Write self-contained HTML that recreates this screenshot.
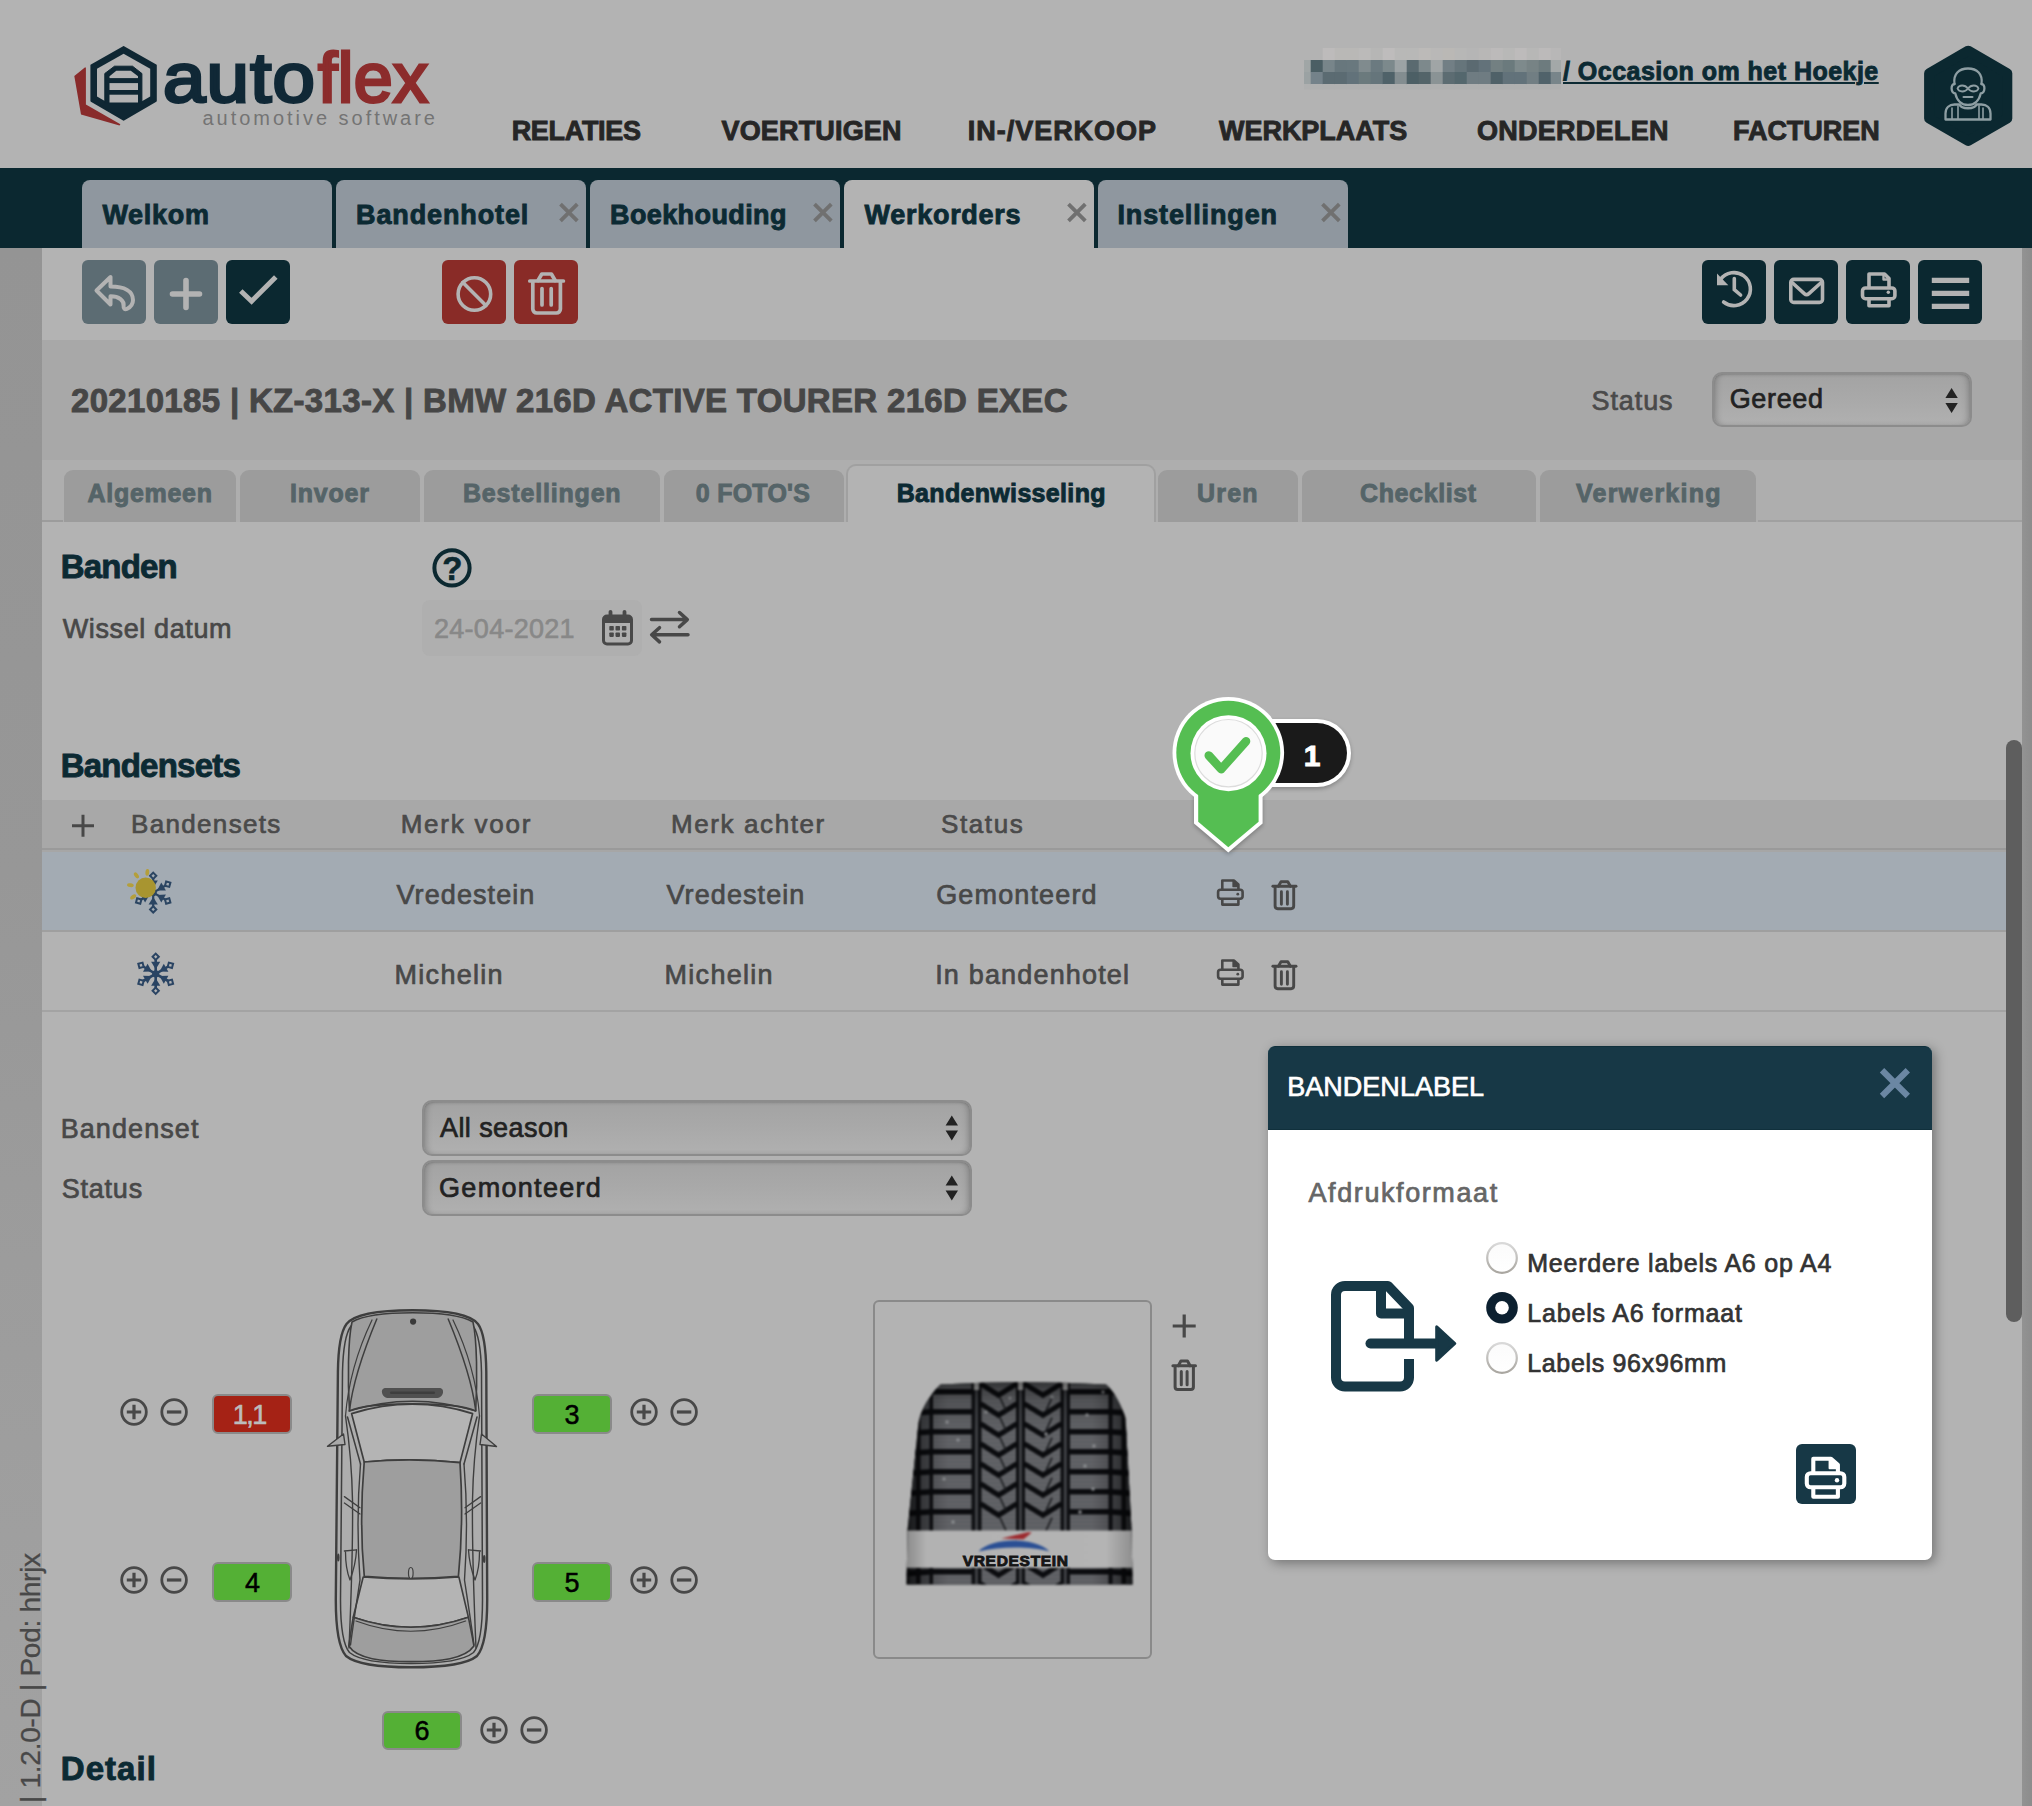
<!DOCTYPE html>
<html lang="nl"><head><meta charset="utf-8"><title>Autoflex - Werkorders</title>
<style>
html,body{margin:0;padding:0;background:#b3b3b3;}
body{width:2032px;height:1806px;overflow:hidden;background:#b3b3b3;font-family:"Liberation Sans",sans-serif;}
#pg{position:relative;width:2032px;height:1806px;overflow:hidden;background:#b3b3b3;}
.a{position:absolute;display:block;}
.t{position:absolute;display:block;white-space:pre;line-height:1;font-family:"Liberation Sans",sans-serif;}
</style></head><body><div id="pg">
<div class="a" style="left:0px;top:0px;width:2032px;height:168px;background:#b3b3b3;"></div>
<svg class="a" style="left:70px;top:40px;filter:blur(.5px);" width="100" height="92" viewBox="70 40 100 92">
<polygon points="84.8,67.6 74.3,75.9 81,114.6 119.5,125.6 120.4,124.3 85.9,104.5 85.9,67.6" fill="#892b2b"/>
<polygon points="123.6,47 155.8,65.3 155.8,100.8 123.6,119.7 91.4,100.8 91.4,65.3" fill="#0f2733" stroke="#0f2733" stroke-width="2" stroke-linejoin="round"/>
<path d="M123.600 53.700 L150.200 68.700 V96.400 L139.800 102.400 H107.400 L97 96.400 V68.700 Z" fill="#b3b3b3"/>
<path d="M104.800 102.900 V73.500 L114.500 66.200 H132.500 L141.900 73.500 V102.900 Z" fill="#0f2733" stroke="#0f2733" stroke-width="1" stroke-linejoin="round"/>
<path d="M109.500 102.400 V76.200 L116.300 70.700 H130.800 L138 76.200 V102.400 Z" fill="#b3b3b3"/>
<rect x="109" y="78.100" width="29.500" height="5" fill="#0f2733"/>
<rect x="109" y="90" width="29.500" height="4.700" fill="#0f2733"/>
</svg>
<svg class="a" style="left:1300px;top:40px;" width="270" height="56" viewBox="1300 40 270 56"><rect x="1304.0" y="60" width="7.0" height="12.2" fill="#a0a6a6"/><rect x="1304.0" y="72" width="7.0" height="12.2" fill="#9ba2a3"/><rect x="1304.0" y="84" width="7.0" height="5.5" fill="#afb0b0"/><rect x="1310.7" y="60" width="12.3" height="12.2" fill="#4b5e64"/><rect x="1310.7" y="72" width="12.3" height="12.2" fill="#74828a"/><rect x="1310.7" y="84" width="12.3" height="5.5" fill="#afb0b0"/><rect x="1322.7" y="48" width="12.3" height="12.2" fill="#bdbbbb"/><rect x="1322.7" y="60" width="12.3" height="12.2" fill="#78858a"/><rect x="1322.7" y="72" width="12.3" height="12.2" fill="#5b6b72"/><rect x="1322.7" y="84" width="12.3" height="5.5" fill="#afb0b0"/><rect x="1334.7" y="48" width="12.3" height="12.2" fill="#b9b8b6"/><rect x="1334.7" y="60" width="12.3" height="12.2" fill="#68777d"/><rect x="1334.7" y="72" width="12.3" height="12.2" fill="#5b6b72"/><rect x="1334.7" y="84" width="12.3" height="5.5" fill="#afb0b0"/><rect x="1346.7" y="48" width="12.3" height="12.2" fill="#b9b8b6"/><rect x="1346.7" y="60" width="12.3" height="12.2" fill="#69787e"/><rect x="1346.7" y="72" width="12.3" height="12.2" fill="#62727a"/><rect x="1346.7" y="84" width="12.3" height="5.5" fill="#afb0b0"/><rect x="1358.7" y="48" width="12.3" height="12.2" fill="#bbbab9"/><rect x="1358.7" y="60" width="12.3" height="12.2" fill="#808b8e"/><rect x="1358.7" y="72" width="12.3" height="12.2" fill="#6b7a7d"/><rect x="1358.7" y="84" width="12.3" height="5.5" fill="#afb0b0"/><rect x="1370.7" y="48" width="12.3" height="12.2" fill="#b6b6b5"/><rect x="1370.7" y="60" width="12.3" height="12.2" fill="#6b7a80"/><rect x="1370.7" y="72" width="12.3" height="12.2" fill="#65757b"/><rect x="1370.7" y="84" width="12.3" height="5.5" fill="#afb0b0"/><rect x="1382.7" y="48" width="12.3" height="12.2" fill="#bebcbc"/><rect x="1382.7" y="60" width="12.3" height="12.2" fill="#7c898c"/><rect x="1382.7" y="72" width="12.3" height="12.2" fill="#4f6269"/><rect x="1382.7" y="84" width="12.3" height="5.5" fill="#afb0b0"/><rect x="1394.7" y="48" width="12.3" height="12.2" fill="#b8b8b7"/><rect x="1394.7" y="60" width="12.3" height="12.2" fill="#9ca3a5"/><rect x="1394.7" y="72" width="12.3" height="12.2" fill="#838d90"/><rect x="1394.7" y="84" width="12.3" height="5.5" fill="#afb0b0"/><rect x="1406.7" y="48" width="12.3" height="12.2" fill="#b8b8b7"/><rect x="1406.7" y="60" width="12.3" height="12.2" fill="#5a6a70"/><rect x="1406.7" y="72" width="12.3" height="12.2" fill="#4c5f65"/><rect x="1406.7" y="84" width="12.3" height="5.5" fill="#afb0b0"/><rect x="1418.7" y="48" width="12.3" height="12.2" fill="#bcbab8"/><rect x="1418.7" y="60" width="12.3" height="12.2" fill="#7d898c"/><rect x="1418.7" y="72" width="12.3" height="12.2" fill="#536469"/><rect x="1418.7" y="84" width="12.3" height="5.5" fill="#afb0b0"/><rect x="1430.7" y="48" width="12.3" height="12.2" fill="#b9b8b7"/><rect x="1430.7" y="60" width="12.3" height="12.2" fill="#a0a5a6"/><rect x="1430.7" y="72" width="12.3" height="12.2" fill="#8a9395"/><rect x="1430.7" y="84" width="12.3" height="5.5" fill="#afb0b0"/><rect x="1442.7" y="48" width="12.3" height="12.2" fill="#bab8b5"/><rect x="1442.7" y="60" width="12.3" height="12.2" fill="#727f85"/><rect x="1442.7" y="72" width="12.3" height="12.2" fill="#5c6c72"/><rect x="1442.7" y="84" width="12.3" height="5.5" fill="#afb0b0"/><rect x="1454.7" y="48" width="12.3" height="12.2" fill="#b7b7b6"/><rect x="1454.7" y="60" width="12.3" height="12.2" fill="#66757b"/><rect x="1454.7" y="72" width="12.3" height="12.2" fill="#54676d"/><rect x="1454.7" y="84" width="12.3" height="5.5" fill="#afb0b0"/><rect x="1466.7" y="48" width="12.3" height="12.2" fill="#b5b5b5"/><rect x="1466.7" y="60" width="12.3" height="12.2" fill="#5b6a71"/><rect x="1466.7" y="72" width="12.3" height="12.2" fill="#6f7c82"/><rect x="1466.7" y="84" width="12.3" height="5.5" fill="#afb0b0"/><rect x="1478.7" y="48" width="12.3" height="12.2" fill="#b8b7b6"/><rect x="1478.7" y="60" width="12.3" height="12.2" fill="#63727a"/><rect x="1478.7" y="72" width="12.3" height="12.2" fill="#6f7c82"/><rect x="1478.7" y="84" width="12.3" height="5.5" fill="#afb0b0"/><rect x="1490.7" y="48" width="12.3" height="12.2" fill="#bcbaba"/><rect x="1490.7" y="60" width="12.3" height="12.2" fill="#738082"/><rect x="1490.7" y="72" width="12.3" height="12.2" fill="#4f6168"/><rect x="1490.7" y="84" width="12.3" height="5.5" fill="#afb0b0"/><rect x="1502.7" y="48" width="12.3" height="12.2" fill="#b8b8b7"/><rect x="1502.7" y="60" width="12.3" height="12.2" fill="#6b7a7d"/><rect x="1502.7" y="72" width="12.3" height="12.2" fill="#62727a"/><rect x="1502.7" y="84" width="12.3" height="5.5" fill="#afb0b0"/><rect x="1514.7" y="48" width="12.3" height="12.2" fill="#bdbbbb"/><rect x="1514.7" y="60" width="12.3" height="12.2" fill="#7e8a8c"/><rect x="1514.7" y="72" width="12.3" height="12.2" fill="#62727a"/><rect x="1514.7" y="84" width="12.3" height="5.5" fill="#afb0b0"/><rect x="1526.7" y="48" width="12.3" height="12.2" fill="#b7b7b6"/><rect x="1526.7" y="60" width="12.3" height="12.2" fill="#778385"/><rect x="1526.7" y="72" width="12.3" height="12.2" fill="#717e83"/><rect x="1526.7" y="84" width="12.3" height="5.5" fill="#afb0b0"/><rect x="1538.7" y="48" width="12.3" height="12.2" fill="#bcbaba"/><rect x="1538.7" y="60" width="12.3" height="12.2" fill="#6d7b7e"/><rect x="1538.7" y="72" width="12.3" height="12.2" fill="#50626a"/><rect x="1538.7" y="84" width="12.3" height="5.5" fill="#afb0b0"/><rect x="1550.7" y="48" width="10.3" height="12.2" fill="#b8b7b7"/><rect x="1550.7" y="60" width="10.3" height="12.2" fill="#a3a8a8"/><rect x="1550.7" y="72" width="10.3" height="12.2" fill="#78858a"/><rect x="1550.7" y="84" width="10.3" height="5.5" fill="#afb0b0"/></svg>
<svg class="a" style="left:1918px;top:40px;" width="100" height="112" viewBox="1918 40 100 112">
<polygon points="1968.2,50.7 2007.3,73.3 2007.3,118.4 1968.2,141 1929.1,118.4 1929.1,73.3" fill="#0b2830" stroke="#0b2830" stroke-width="10" stroke-linejoin="round"/>
<g fill="none" stroke="#8e9ea3" stroke-width="2.3" stroke-linecap="round" stroke-linejoin="round">
<path d="M1954.5 84 C1953 74 1959 68.5 1968 68.5 C1977 68.5 1983 74 1981.5 84"/>
<path d="M1954.5 84 c-4 0 -4 9 0.8 9.5 C1957 101 1962 105 1968 105 C1974 105 1979 101 1980.7 93.5 c4.800 -0.500 4.800 -9.500 0.800 -9.500"/>
<path d="M1968 88.500 c-3 -4 -9 -4 -10.500 0 c1.500 4 7.500 4 10.500 0 c3 -4 9 -4 10.500 0 c-1.500 4 -7.500 4 -10.500 0 z" stroke-width="1.800"/>
<path d="M1963.500 97 h9" stroke-width="2"/>
<path d="M1945.500 119.500 v-6 c0 -6 4 -9 9 -9 h5 c2 5 15 5 17 0 h5 c5 0 9 3 9 9 v6 z"/>
<path d="M1952 108 v11 M1958 106 v13 M1979 106 v13 M1983 108 v11" stroke-width="1.600"/>
</g></svg>
<div class="a" style="left:0px;top:168px;width:2032px;height:80px;background:#0b2830;"></div>
<div class="a" style="left:82px;top:180px;width:250px;height:68px;background:#8f979f;border-radius:8px 8px 0 0;"></div>
<div class="a" style="left:336px;top:180px;width:250px;height:68px;background:#8f979f;border-radius:8px 8px 0 0;"></div>
<div class="a" style="left:590px;top:180px;width:250px;height:68px;background:#8f979f;border-radius:8px 8px 0 0;"></div>
<div class="a" style="left:844px;top:180px;width:250px;height:68px;background:#b3b3b3;border-radius:8px 8px 0 0;"></div>
<div class="a" style="left:1098px;top:180px;width:250px;height:68px;background:#8f979f;border-radius:8px 8px 0 0;"></div>
<svg class="a" style="left:550px;top:198px;" width="800" height="32" viewBox="550 198 800 32"><path d="M560.5 204.100 L577.3 220.900 M577.3 204.100 L560.5 220.900" stroke="#707070" stroke-width="3.800" fill="none"/><path d="M814.5 204.100 L831.3 220.900 M831.3 204.100 L814.5 220.900" stroke="#707070" stroke-width="3.800" fill="none"/><path d="M1068.5 204.100 L1085.3000000000002 220.900 M1085.3000000000002 204.100 L1068.5 220.900" stroke="#707070" stroke-width="3.800" fill="none"/><path d="M1322.5 204.100 L1339.3000000000002 220.900 M1339.3000000000002 204.100 L1322.5 220.900" stroke="#707070" stroke-width="3.800" fill="none"/></svg>
<div class="a" style="left:0px;top:248px;width:42px;height:1558px;background:linear-gradient(180deg,#949494 0%,#979797 40%,#9c9c9c 65%,#a2a2a2 100%);"></div>
<div class="a" style="left:2022px;top:248px;width:10px;height:1558px;background:linear-gradient(90deg,#939393,#8c8c8c);"></div>
<div class="a" style="left:42px;top:248px;width:1980px;height:92px;background:#b3b3b3;"></div>
<div class="a" style="left:82px;top:260px;width:64px;height:64px;background:#5c6c73;border-radius:6px;"></div>
<div class="a" style="left:154px;top:260px;width:64px;height:64px;background:#5c6c73;border-radius:6px;"></div>
<div class="a" style="left:226px;top:260px;width:64px;height:64px;background:#0b2830;border-radius:6px;"></div>
<div class="a" style="left:442px;top:260px;width:64px;height:64px;background:#892b27;border-radius:6px;"></div>
<div class="a" style="left:514px;top:260px;width:64px;height:64px;background:#892b27;border-radius:6px;"></div>
<div class="a" style="left:1702px;top:260px;width:64px;height:64px;background:#0b2830;border-radius:6px;"></div>
<div class="a" style="left:1774px;top:260px;width:64px;height:64px;background:#0b2830;border-radius:6px;"></div>
<div class="a" style="left:1846px;top:260px;width:64px;height:64px;background:#0b2830;border-radius:6px;"></div>
<div class="a" style="left:1918px;top:260px;width:64px;height:64px;background:#0b2830;border-radius:6px;"></div>
<svg class="a" style="left:82px;top:260px;" width="1900" height="64" viewBox="82 260 1900 64"><g fill="none" stroke="#b3b3b3" stroke-linecap="round" stroke-linejoin="round">
<path d="M96.500 290.500 L110.500 277 V286.500 C124.500 286.500 133 291 133 300 C133 304 131 307 126.800 309 C124.800 309.800 123.300 308.300 123.600 306.200 C124.400 300.500 119 296.200 110.500 296.200 V304.500 Z" stroke-width="4"/>
<path d="M186 280.500 V307.500 M172.500 294 H199.500" stroke-width="5.600"/>
<path d="M240.800 291 L251.600 301.200 L275.800 277" stroke-width="5" stroke-linecap="butt" stroke-linejoin="miter"/>
<circle cx="474.400" cy="294" r="16.300" stroke-width="3.600"/>
<path d="M462.900 282.500 L485.900 305.500" stroke-width="3.600"/>
<g stroke-width="3.700">
<path d="M529.800 281 H563.400"/>
<path d="M538 280.500 L541.800 274 H551.400 L555.200 280.500"/>
<path d="M532.800 282 V309 a4 4 0 0 0 4 4 H556.400 a4 4 0 0 0 4 -4 V282"/>
<path d="M542 288.500 V305 M551.200 288.500 V305"/>
</g>
<g stroke-width="3.600">
<path d="M1720.500 279.500 A16.500 16.500 0 1 1 1723.600 302"/>
<path d="M1734.300 278.600 V289.600 L1740.600 295" stroke-linejoin="miter"/>
<path d="M1717 273.500 V285.200 H1728.300 Z" fill="#b3b3b3" stroke="none"/>
<rect x="1790.800" y="279.400" width="31.700" height="23" rx="3"/>
<path d="M1791.500 282 L1804.300 293.600 a3.400 3.400 0 0 0 4.600 0 L1821.800 282"/>
<path d="M1869 287.500 V274 H1884.500 L1889 278.500 V287.500" stroke-linecap="butt"/>
<path d="M1883.500 274.500 V279.500 H1888.500" stroke-width="2.400"/>
<rect x="1862.500" y="288" width="32.400" height="10.700" rx="3"/>
<path d="M1869 299 V305.700 H1889 V299" stroke-linecap="butt"/>
</g>
<circle cx="1888.300" cy="292.200" r="1.700" fill="#b3b3b3" stroke="none"/>
<path d="M1931.800 280.400 H1969.200 M1931.800 293.400 H1969.200 M1931.800 306.400 H1969.200" stroke-width="5.200" stroke-linecap="butt"/>
</g></svg>
<div class="a" style="left:42px;top:340px;width:1980px;height:120px;background:#a8a8a8;"></div>
<div class="a" style="left:1712px;top:372px;width:260px;height:55px;background:;border:2px solid #8c8c8c;border-radius:10px;box-sizing:border-box;background:linear-gradient(180deg,#a3a3a3 0%,#a9a9a9 50%,#b0b0b0 100%);box-shadow:inset 5px 0 6px -3px rgba(0,0,0,.22),inset -5px 0 6px -3px rgba(0,0,0,.22),inset 0 1px 2px rgba(0,0,0,.1);"></div>
<svg class="a" style="left:1940px;top:384px;" width="24" height="32" viewBox="1940 384 24 32"><path d="M1945.3999999999999 397.9 L1951.6 388.0 L1957.8 397.9 Z M1945.3999999999999 403.1 L1951.6 413.0 L1957.8 403.1 Z" fill="#222"/></svg>
<div class="a" style="left:42px;top:460px;width:1980px;height:62px;background:#aeaeae;"></div>
<div class="a" style="left:42px;top:520px;width:21px;height:2px;background:#9c9c9c;"></div>
<div class="a" style="left:1758px;top:520px;width:264px;height:2px;background:#a0a0a0;"></div>
<div class="a" style="left:64px;top:470px;width:172px;height:52px;background:#9c9c9c;border-radius:9px 9px 0 0;"></div>
<div class="a" style="left:240px;top:470px;width:180px;height:52px;background:#9c9c9c;border-radius:9px 9px 0 0;"></div>
<div class="a" style="left:424px;top:470px;width:236px;height:52px;background:#9c9c9c;border-radius:9px 9px 0 0;"></div>
<div class="a" style="left:664px;top:470px;width:180px;height:52px;background:#9c9c9c;border-radius:9px 9px 0 0;"></div>
<div class="a" style="left:1158px;top:470px;width:140px;height:52px;background:#9c9c9c;border-radius:9px 9px 0 0;"></div>
<div class="a" style="left:1302px;top:470px;width:234px;height:52px;background:#9c9c9c;border-radius:9px 9px 0 0;"></div>
<div class="a" style="left:1540px;top:470px;width:216px;height:52px;background:#9c9c9c;border-radius:9px 9px 0 0;"></div>
<div class="a" style="left:846px;top:464px;width:310px;height:58px;background:#b3b3b3;border:2px solid #a0a0a0;border-bottom:none;border-radius:10px 10px 0 0;box-sizing:border-box;"></div>
<svg class="a" style="left:430px;top:546px;" width="44" height="44" viewBox="430 546 44 44"><circle cx="452" cy="567.900" r="17.600" fill="none" stroke="#0b2830" stroke-width="4"/></svg>
<span class="t" style="left:442.300px;top:552px;font-size:33px;font-weight:700;color:#0b2830;-webkit-text-stroke:.6px;">?</span>
<div class="a" style="left:422px;top:600px;width:220px;height:56px;background:#afafaf;border-radius:8px;"></div>
<svg class="a" style="left:598px;top:606px;" width="96" height="44" viewBox="598 606 96 44"><g fill="none" stroke="#484848" stroke-width="3" stroke-linejoin="round">
<rect x="603.500" y="616" width="28" height="28" rx="3.500"/>
<rect x="604" y="616.500" width="27" height="6.500" fill="#484848" stroke="none"/>
<path d="M610.500 611.800 V618 M624.500 611.800 V618" stroke-width="3.800" stroke-linecap="round"/>
</g>
<g fill="#484848"><rect x="609.300" y="626" width="4.500" height="4.500" rx=".8"/><rect x="615.500" y="626" width="4.500" height="4.500" rx=".8"/><rect x="621.900" y="626" width="4.500" height="4.500" rx=".8"/>
<rect x="609.300" y="632.400" width="4.500" height="4.500" rx=".8"/><rect x="615.500" y="632.400" width="4.500" height="4.500" rx=".8"/><rect x="621.900" y="632.400" width="4.500" height="4.500" rx=".8"/></g>
<g fill="none" stroke="#484848" stroke-width="3.500" stroke-linecap="round" stroke-linejoin="round">
<path d="M651.500 619.600 H686.500 M679.500 612.500 L687.300 619.600 L679.500 626.700"/>
<path d="M688 634.800 H652.500 M659.500 627.700 L651.700 634.800 L659.500 641.900"/>
</g></svg>
<div class="a" style="left:42px;top:800px;width:1964px;height:48px;background:#a8a8a8;"></div>
<div class="a" style="left:42px;top:848px;width:1964px;height:2px;background:#9a9a9a;"></div>
<div class="a" style="left:42px;top:850px;width:1964px;height:2px;background:#a6a6a6;"></div>
<div class="a" style="left:42px;top:852px;width:1964px;height:78px;background:#a3abb3;"></div>
<div class="a" style="left:42px;top:930px;width:1964px;height:2px;background:#9f9f9f;"></div>
<div class="a" style="left:42px;top:1010px;width:1964px;height:2px;background:#a3a3a3;"></div>
<svg class="a" style="left:70px;top:812px;" width="28" height="28" viewBox="70 812 28 28"><path d="M83 814.800 V836.800 M72 825.800 H94" stroke="#484848" stroke-width="3" fill="none"/></svg>
<svg class="a" style="left:1214px;top:876px;" width="90" height="38" viewBox="1214 876 90 38"><g fill="none" stroke="#484848" stroke-width="2.6" stroke-linejoin="round"><path d="M1222.3 889.7 V880.5 H1233.9 L1238.4 884.4 V889.7"/><rect x="1218.1" y="889.7" width="24.5" height="9.0" rx="2.4"/><path d="M1222.3 898.7 V904.6 H1238.4 V898.7"/><path d="M1233.0 880.5 V886.6 H1238.4 Z" fill="#484848" stroke-width="1.30"/></g><circle cx="1237.8" cy="894.2" r="1.4" fill="#484848"/><g fill="none" stroke="#484848" stroke-width="2.9" stroke-linecap="round" stroke-linejoin="round"><path d="M1272.9 886.3 H1296.0"/><path d="M1278.4 886.3 L1281.0 881.8 H1287.8 L1290.4 886.3"/><path d="M1275.1 887.3 V906.1 a2.6 2.6 0 0 0 2.6 2.6 H1291.1 a2.6 2.6 0 0 0 2.6 -2.6 V887.3"/><path d="M1281.4 891.7 V904.2 M1287.4 891.7 V904.2"/></g></svg>
<svg class="a" style="left:1214px;top:956px;" width="90" height="38" viewBox="1214 956 90 38"><g fill="none" stroke="#484848" stroke-width="2.6" stroke-linejoin="round"><path d="M1222.3 969.7 V960.5 H1233.9 L1238.4 964.4 V969.7"/><rect x="1218.1" y="969.7" width="24.5" height="9.0" rx="2.4"/><path d="M1222.3 978.7 V984.6 H1238.4 V978.7"/><path d="M1233.0 960.5 V966.6 H1238.4 Z" fill="#484848" stroke-width="1.30"/></g><circle cx="1237.8" cy="974.2" r="1.4" fill="#484848"/><g fill="none" stroke="#484848" stroke-width="2.9" stroke-linecap="round" stroke-linejoin="round"><path d="M1272.9 966.3 H1296.0"/><path d="M1278.4 966.3 L1281.0 961.8 H1287.8 L1290.4 966.3"/><path d="M1275.1 967.3 V986.1 a2.6 2.6 0 0 0 2.6 2.6 H1291.1 a2.6 2.6 0 0 0 2.6 -2.6 V967.3"/><path d="M1281.4 971.7 V984.2 M1287.4 971.7 V984.2"/></g></svg>
<svg class="a" style="left:124px;top:864px;filter:blur(.7px);" width="54" height="54" viewBox="124 864 54 54"><path d="M153.2 892.6 L153.2 878.3" stroke="#2b4562" stroke-width="2.2"/><rect x="-2.2" y="-2.2" width="4.4" height="4.4" fill="none" stroke="#2b4562" stroke-width="2" transform="translate(153.2 875.8) rotate(-45)"/><path d="M153.2 888.1 L157.8 880.6 L148.6 880.6 Z" fill="#2b4562"/><path d="M153.2 892.6 L165.6 885.5" stroke="#2b4562" stroke-width="2.2"/><rect x="-2.2" y="-2.2" width="4.4" height="4.4" fill="none" stroke="#2b4562" stroke-width="2" transform="translate(167.7 884.2) rotate(15)"/><path d="M157.1 890.4 L165.9 890.6 L161.3 882.6 Z" fill="#2b4562"/><path d="M153.2 892.6 L165.6 899.8" stroke="#2b4562" stroke-width="2.2"/><rect x="-2.2" y="-2.2" width="4.4" height="4.4" fill="none" stroke="#2b4562" stroke-width="2" transform="translate(167.7 901.0) rotate(75)"/><path d="M157.1 894.9 L161.3 902.6 L165.9 894.6 Z" fill="#2b4562"/><path d="M153.2 892.6 L153.2 906.9" stroke="#2b4562" stroke-width="2.2"/><rect x="-2.2" y="-2.2" width="4.4" height="4.4" fill="none" stroke="#2b4562" stroke-width="2" transform="translate(153.2 909.4) rotate(135)"/><path d="M153.2 897.1 L148.6 904.6 L157.8 904.6 Z" fill="#2b4562"/><path d="M153.2 892.6 L140.8 899.8" stroke="#2b4562" stroke-width="2.2"/><rect x="-2.2" y="-2.2" width="4.4" height="4.4" fill="none" stroke="#2b4562" stroke-width="2" transform="translate(138.7 901.0) rotate(195)"/><path d="M149.3 894.9 L140.5 894.6 L145.1 902.6 Z" fill="#2b4562"/><circle cx="153.2" cy="892.6" r="3.600" fill="#2b4562"/><circle cx="145.700" cy="887.800" r="10.200" fill="#a89530"/><ellipse cx="0" cy="0" rx="3.400" ry="1.900" fill="#b49f3c" transform="translate(147.3 872.4) rotate(276)"/><ellipse cx="0" cy="0" rx="3.400" ry="1.900" fill="#b49f3c" transform="translate(136.4 875.4) rotate(233)"/><ellipse cx="0" cy="0" rx="3.400" ry="1.900" fill="#b49f3c" transform="translate(130.4 885.2) rotate(189.5)"/><ellipse cx="0" cy="0" rx="3.400" ry="1.900" fill="#b49f3c" transform="translate(133.2 896.9) rotate(144)"/></svg>
<svg class="a" style="left:132px;top:950px;filter:blur(.7px);" width="48" height="48" viewBox="132 950 48 48"><path d="M155.7 973.8 L155.7 959.3" stroke="#2a4463" stroke-width="2.6"/><rect x="-2.2" y="-2.2" width="4.4" height="4.4" fill="none" stroke="#2a4463" stroke-width="2" transform="translate(155.7 956.8) rotate(-45)"/><path d="M155.7 969.3 L160.3 961.8 L151.1 961.8 Z" fill="#2a4463"/><path d="M155.7 973.8 L168.3 966.5" stroke="#2a4463" stroke-width="2.6"/><rect x="-2.2" y="-2.2" width="4.4" height="4.4" fill="none" stroke="#2a4463" stroke-width="2" transform="translate(170.4 965.3) rotate(15)"/><path d="M159.6 971.5 L168.4 971.8 L163.8 963.8 Z" fill="#2a4463"/><path d="M155.7 973.8 L168.3 981.0" stroke="#2a4463" stroke-width="2.6"/><rect x="-2.2" y="-2.2" width="4.4" height="4.4" fill="none" stroke="#2a4463" stroke-width="2" transform="translate(170.4 982.3) rotate(75)"/><path d="M159.6 976.0 L163.8 983.8 L168.4 975.8 Z" fill="#2a4463"/><path d="M155.7 973.8 L155.7 988.3" stroke="#2a4463" stroke-width="2.6"/><rect x="-2.2" y="-2.2" width="4.4" height="4.4" fill="none" stroke="#2a4463" stroke-width="2" transform="translate(155.7 990.8) rotate(135)"/><path d="M155.7 978.3 L151.1 985.8 L160.3 985.8 Z" fill="#2a4463"/><path d="M155.7 973.8 L143.1 981.0" stroke="#2a4463" stroke-width="2.6"/><rect x="-2.2" y="-2.2" width="4.4" height="4.4" fill="none" stroke="#2a4463" stroke-width="2" transform="translate(141.0 982.3) rotate(195)"/><path d="M151.8 976.0 L143.0 975.8 L147.6 983.8 Z" fill="#2a4463"/><path d="M155.7 973.8 L143.1 966.5" stroke="#2a4463" stroke-width="2.6"/><rect x="-2.2" y="-2.2" width="4.4" height="4.4" fill="none" stroke="#2a4463" stroke-width="2" transform="translate(141.0 965.3) rotate(255)"/><path d="M151.8 971.5 L147.6 963.8 L143.0 971.8 Z" fill="#2a4463"/><circle cx="155.7" cy="973.8" r="3.600" fill="#2a4463"/></svg>
<div class="a" style="left:422px;top:1100px;width:550px;height:56px;background:;border:2px solid #8c8c8c;border-radius:10px;box-sizing:border-box;background:linear-gradient(180deg,#a3a3a3 0%,#a9a9a9 50%,#b0b0b0 100%);box-shadow:inset 5px 0 6px -3px rgba(0,0,0,.22),inset -5px 0 6px -3px rgba(0,0,0,.22),inset 0 1px 2px rgba(0,0,0,.1);"></div>
<div class="a" style="left:422px;top:1160px;width:550px;height:56px;background:;border:2px solid #8c8c8c;border-radius:10px;box-sizing:border-box;background:linear-gradient(180deg,#a3a3a3 0%,#a9a9a9 50%,#b0b0b0 100%);box-shadow:inset 5px 0 6px -3px rgba(0,0,0,.22),inset -5px 0 6px -3px rgba(0,0,0,.22),inset 0 1px 2px rgba(0,0,0,.1);"></div>
<svg class="a" style="left:940px;top:1112px;" width="24" height="32" viewBox="940 1112 24 32"><path d="M945.5999999999999 1125.4 L951.8 1115.5 L958.0 1125.4 Z M945.5999999999999 1130.6 L951.8 1140.5 L958.0 1130.6 Z" fill="#222"/></svg>
<svg class="a" style="left:940px;top:1172px;" width="24" height="32" viewBox="940 1172 24 32"><path d="M945.5999999999999 1185.4 L951.8 1175.5 L958.0 1185.4 Z M945.5999999999999 1190.6 L951.8 1200.5 L958.0 1190.6 Z" fill="#222"/></svg>
<div class="a" style="left:212px;top:1394px;width:80px;height:39.5px;background:#a52215;border:2px solid #8a8a8a;border-radius:6px;box-sizing:border-box;"></div>
<div class="a" style="left:532px;top:1394px;width:80px;height:39.5px;background:#54b035;border:2px solid #8a8a8a;border-radius:6px;box-sizing:border-box;"></div>
<div class="a" style="left:212px;top:1562px;width:80px;height:39.5px;background:#54b035;border:2px solid #8a8a8a;border-radius:6px;box-sizing:border-box;"></div>
<div class="a" style="left:532px;top:1562px;width:80px;height:39.5px;background:#54b035;border:2px solid #8a8a8a;border-radius:6px;box-sizing:border-box;"></div>
<div class="a" style="left:382px;top:1710.5px;width:80px;height:39.5px;background:#54b035;border:2px solid #8a8a8a;border-radius:6px;box-sizing:border-box;"></div>
<svg class="a" style="left:118.19999999999999px;top:1395.9px;" width="74" height="32" viewBox="118.19999999999999 1395.9 74 32"><g fill="none" stroke="#484848" stroke-width="2.800"><circle cx="134.2" cy="1411.9" r="12.300"/><path d="M126.99999999999999 1411.9 H141.39999999999998 M134.2 1404.7 V1419.1000000000001" stroke-width="3.200"/><circle cx="174.29999999999998" cy="1411.9" r="12.300"/><path d="M167.1 1411.9 H181.49999999999997" stroke-width="3.200"/></g></svg>
<svg class="a" style="left:628.1px;top:1395.9px;" width="74" height="32" viewBox="628.1 1395.9 74 32"><g fill="none" stroke="#484848" stroke-width="2.800"><circle cx="644.1" cy="1411.9" r="12.300"/><path d="M636.9 1411.9 H651.3000000000001 M644.1 1404.7 V1419.1000000000001" stroke-width="3.200"/><circle cx="684.2" cy="1411.9" r="12.300"/><path d="M677.0 1411.9 H691.4000000000001" stroke-width="3.200"/></g></svg>
<svg class="a" style="left:118.19999999999999px;top:1563.7px;" width="74" height="32" viewBox="118.19999999999999 1563.7 74 32"><g fill="none" stroke="#484848" stroke-width="2.800"><circle cx="134.2" cy="1579.7" r="12.300"/><path d="M126.99999999999999 1579.7 H141.39999999999998 M134.2 1572.5 V1586.9" stroke-width="3.200"/><circle cx="174.29999999999998" cy="1579.7" r="12.300"/><path d="M167.1 1579.7 H181.49999999999997" stroke-width="3.200"/></g></svg>
<svg class="a" style="left:628.1px;top:1563.7px;" width="74" height="32" viewBox="628.1 1563.7 74 32"><g fill="none" stroke="#484848" stroke-width="2.800"><circle cx="644.1" cy="1579.7" r="12.300"/><path d="M636.9 1579.7 H651.3000000000001 M644.1 1572.5 V1586.9" stroke-width="3.200"/><circle cx="684.2" cy="1579.7" r="12.300"/><path d="M677.0 1579.7 H691.4000000000001" stroke-width="3.200"/></g></svg>
<svg class="a" style="left:478.1px;top:1713.5px;" width="74" height="32" viewBox="478.1 1713.5 74 32"><g fill="none" stroke="#484848" stroke-width="2.800"><circle cx="494.1" cy="1729.5" r="12.300"/><path d="M486.90000000000003 1729.5 H501.3 M494.1 1722.3 V1736.7" stroke-width="3.200"/><circle cx="534.2" cy="1729.5" r="12.300"/><path d="M527.0 1729.5 H541.4000000000001" stroke-width="3.200"/></g></svg>
<svg class="a" style="left:320px;top:1300px;filter:blur(.7px);" width="184" height="380" viewBox="320 1300 184 380"><g fill="none" stroke="#3e3e3e" stroke-width="1.500" stroke-linejoin="round" stroke-linecap="round">
<path d="M412.500 1310.300 C445 1310.300 470 1314 478 1324 C484 1332 486 1348 486.300 1372 L487.200 1600 C487.200 1630 484 1648 477 1656 C466 1665 440 1667.300 411 1667.300 C382 1667.300 357 1665 346 1656 C339 1648 335.800 1630 335.800 1600 L337.900 1372 C338.200 1348 340.500 1332 346.500 1324 C354.500 1314 380 1310.300 412.500 1310.300 Z" fill="#adadad" stroke-width="2.400"/>
<path d="M412.500 1314 C442 1314 465 1317 473 1326 C479 1334 481 1350 481.500 1372 L482.500 1600 C482.500 1629 480 1645 473.500 1652.500 C463 1661 438 1663.500 411 1663.500 C384 1663.500 360 1661 349.500 1652.500 C343 1645 340.500 1629 340.500 1600 L342.500 1372 C343 1350 345 1334 351 1326 C359 1317 383 1314 412.500 1314 Z" stroke-width="1.500"/>
<path d="M352 1322 C365 1314.500 390 1312.800 412.600 1312.800 C435 1312.800 460 1314.500 473 1322 C477 1340 477.500 1380 475.700 1411 C455 1401.500 370 1401.500 349.500 1411 C347.500 1380 348 1340 352 1322 Z" fill="#9e9e9e" stroke-width="1.600"/>
<path d="M376.800 1319 C366 1345 353 1380 349.500 1410.500 M448.200 1319 C459 1345 472 1380 475.700 1410.500" stroke-width="1.500"/>
<path d="M372 1320 C360 1345 348.500 1378 345.500 1416 M453 1320 C465 1345 476.500 1378 479.500 1416" stroke-width="1.200"/>
<path d="M351.600 1413.600 Q412.600 1394.800 472.600 1413.600 L460 1462.600 Q412.600 1457.500 364.200 1462 Z" fill="#b4b4b4" stroke-width="1.700"/>
<path d="M349 1411 Q412.600 1391.500 475.700 1411" stroke-width="1.300"/>
<path d="M347.500 1417 L360.500 1464 M477 1417 L464 1464" stroke-width="1.500"/>
<path d="M364.200 1462 Q412.600 1457.500 460 1462.600 C462.500 1500 461.500 1545 458.400 1576.300 Q411 1580.500 364.300 1576.300 C361.200 1545 361 1500 364.200 1462 Z" fill="#9e9e9e" stroke-width="1.700"/>
<path d="M363.200 1577 Q411 1581 458.900 1577 L468.400 1617.300 Q410.800 1637.300 353.200 1617.300 Z" fill="#b4b4b4" stroke-width="1.600"/>
<path d="M353.200 1617.300 Q410.800 1637.300 468.400 1617.300 C471 1630 473 1640 473.900 1646 C465 1659 440 1661.600 411 1661.600 C382 1661.600 357 1659 348.800 1646 C349.700 1640 351 1630 353.200 1617.300 Z" fill="#9e9e9e" stroke-width="1.600"/>
<path d="M356 1621 Q410.800 1641.500 465.600 1621" stroke-width="1.200"/>
<path d="M345.500 1416 C349 1440 352 1470 352.500 1500 C353 1540 351.500 1590 349 1648 M479.500 1416 C476 1440 473 1470 472.500 1500 C472 1540 473.500 1590 476 1648" stroke-width="1.400"/>
<path d="M360.500 1464 C357.500 1500 357.500 1545 360 1580 C357 1600 353 1625 350.500 1645 M464 1464 C467 1500 467 1545 464.500 1580 C467.500 1600 471.500 1625 474 1645" stroke-width="1.400"/>
<path d="M344.400 1496.600 L360 1507.700 M344.400 1503 L360 1514 M480.600 1496.600 L465 1507.700 M480.600 1503 L465 1514" stroke-width="1.300"/>
<path d="M344.400 1551 L356.500 1549.800 M480.600 1551 L468.500 1549.800" stroke-width="1.300"/>
<path d="M345.500 1552 C345.500 1565 348 1575 350 1580 C353 1572 356 1560 356.500 1550 M479.500 1552 C479.500 1565 477 1575 475 1580 C472 1572 469 1560 468.500 1550" stroke-width="1.300"/>
<ellipse cx="410.800" cy="1573" rx="2.300" ry="5.500" fill="#a8a8a8" stroke-width="1.200"/>
<path d="M343.500 1434 L327.500 1446.300 L345 1444.500 Z M481.500 1434 L496.500 1446.500 L480 1444.500 Z" fill="#a9a9a9" stroke-width="1.400"/>
</g>
<path d="M386 1388 H439 C442 1388 443.500 1390 443 1392.500 C442.500 1396 440 1398 436 1398 H389 C385 1398 382.500 1396 382 1392.500 C381.500 1390 383 1388 386 1388 Z" fill="#505050"/>
<rect x="390" y="1391.500" width="45" height="2.500" rx="1.200" fill="#3e3e3e"/>
<circle cx="413.100" cy="1321.600" r="3.100" fill="#3a3a3a"/>
<ellipse cx="338.300" cy="1557.500" rx="1.300" ry="4" fill="#3e3e3e"/><ellipse cx="484.200" cy="1559" rx="1.300" ry="4" fill="#3e3e3e"/>
</svg>
<div class="a" style="left:873px;top:1300px;width:279px;height:359px;background:;border:2px solid #8a8a8a;border-radius:6px;box-sizing:border-box;"></div>
<svg class="a" style="left:896px;top:1374px;filter:blur(.8px);" width="248" height="218" viewBox="896 1374 248 218"><defs><clipPath id="tc"><path d="M940.600 1384.500 Q1023 1379.500 1106 1384.500 C1114 1391 1121 1405 1125.500 1418 L1131.500 1529 L1132.500 1584.500 L906.500 1584.500 L907.600 1529.500 L918.600 1422 C921 1410 930 1394 940.600 1384.500 Z"/></clipPath><linearGradient id="tg" x1="0" x2="1" y1="0" y2="0"><stop offset="0" stop-color="#000" stop-opacity=".75"/><stop offset=".1" stop-color="#000" stop-opacity=".25"/><stop offset=".2" stop-color="#000" stop-opacity="0"/><stop offset=".8" stop-color="#000" stop-opacity="0"/><stop offset=".9" stop-color="#000" stop-opacity=".25"/><stop offset="1" stop-color="#000" stop-opacity=".75"/></linearGradient><linearGradient id="tv" x1="0" x2="0" y1="0" y2="1"><stop offset="0" stop-color="#000" stop-opacity=".55"/><stop offset=".12" stop-color="#000" stop-opacity=".15"/><stop offset=".25" stop-color="#000" stop-opacity="0"/></linearGradient><linearGradient id="bg2" x1="0" x2="1" y1="0" y2="0"><stop offset="0" stop-color="#8a8a8a"/><stop offset=".09" stop-color="#b2b2b2"/><stop offset=".88" stop-color="#b4b4b4"/><stop offset="1" stop-color="#8e8e8e"/></linearGradient></defs><g clip-path="url(#tc)"><rect x="900" y="1375" width="240" height="215" fill="#0e0f12"/><rect x="909" y="1380" width="7" height="210" fill="#3a3c40"/><rect x="920.5" y="1380" width="9.0" height="210" fill="#4a4c50"/><rect x="933" y="1380" width="38.5" height="210" fill="#5b5d61"/><rect x="981.5" y="1380" width="34.5" height="210" fill="#5b5d61"/><rect x="1025" y="1380" width="35.5" height="210" fill="#5b5d61"/><rect x="1070" y="1380" width="38.5" height="210" fill="#5b5d61"/><rect x="1112.5" y="1380" width="9.0" height="210" fill="#4a4c50"/><rect x="1126" y="1380" width="7" height="210" fill="#3a3c40"/><path d="M933 1388 H971.500 M981.500 1389 H1016 M1025 1389 H1060.500 M1070 1388 H1108.500 M933 1392 H971.500 M981.500 1393 H1016 M1025 1393 H1060.500 M1070 1392 H1108.500 M933 1396 H971.500 M981.500 1397 H1016 M1025 1397 H1060.500 M1070 1396 H1108.500 M933 1400 H971.500 M981.500 1401 H1016 M1025 1401 H1060.500 M1070 1400 H1108.500 M933 1404 H971.500 M981.500 1405 H1016 M1025 1405 H1060.500 M1070 1404 H1108.500 M933 1408 H971.500 M981.500 1409 H1016 M1025 1409 H1060.500 M1070 1408 H1108.500 M933 1412 H971.500 M981.500 1413 H1016 M1025 1413 H1060.500 M1070 1412 H1108.500 M933 1416 H971.500 M981.500 1417 H1016 M1025 1417 H1060.500 M1070 1416 H1108.500 M933 1420 H971.500 M981.500 1421 H1016 M1025 1421 H1060.500 M1070 1420 H1108.500 M933 1424 H971.500 M981.500 1425 H1016 M1025 1425 H1060.500 M1070 1424 H1108.500 M933 1428 H971.500 M981.500 1429 H1016 M1025 1429 H1060.500 M1070 1428 H1108.500 M933 1432 H971.500 M981.500 1433 H1016 M1025 1433 H1060.500 M1070 1432 H1108.500 M933 1436 H971.500 M981.500 1437 H1016 M1025 1437 H1060.500 M1070 1436 H1108.500 M933 1440 H971.500 M981.500 1441 H1016 M1025 1441 H1060.500 M1070 1440 H1108.500 M933 1444 H971.500 M981.500 1445 H1016 M1025 1445 H1060.500 M1070 1444 H1108.500 M933 1448 H971.500 M981.500 1449 H1016 M1025 1449 H1060.500 M1070 1448 H1108.500 M933 1452 H971.500 M981.500 1453 H1016 M1025 1453 H1060.500 M1070 1452 H1108.500 M933 1456 H971.500 M981.500 1457 H1016 M1025 1457 H1060.500 M1070 1456 H1108.500 M933 1460 H971.500 M981.500 1461 H1016 M1025 1461 H1060.500 M1070 1460 H1108.500 M933 1464 H971.500 M981.500 1465 H1016 M1025 1465 H1060.500 M1070 1464 H1108.500 M933 1468 H971.500 M981.500 1469 H1016 M1025 1469 H1060.500 M1070 1468 H1108.500 M933 1472 H971.500 M981.500 1473 H1016 M1025 1473 H1060.500 M1070 1472 H1108.500 M933 1476 H971.500 M981.500 1477 H1016 M1025 1477 H1060.500 M1070 1476 H1108.500 M933 1480 H971.500 M981.500 1481 H1016 M1025 1481 H1060.500 M1070 1480 H1108.500 M933 1484 H971.500 M981.500 1485 H1016 M1025 1485 H1060.500 M1070 1484 H1108.500 M933 1488 H971.500 M981.500 1489 H1016 M1025 1489 H1060.500 M1070 1488 H1108.500 M933 1492 H971.500 M981.500 1493 H1016 M1025 1493 H1060.500 M1070 1492 H1108.500 M933 1496 H971.500 M981.500 1497 H1016 M1025 1497 H1060.500 M1070 1496 H1108.500 M933 1500 H971.500 M981.500 1501 H1016 M1025 1501 H1060.500 M1070 1500 H1108.500 M933 1504 H971.500 M981.500 1505 H1016 M1025 1505 H1060.500 M1070 1504 H1108.500 M933 1508 H971.500 M981.500 1509 H1016 M1025 1509 H1060.500 M1070 1508 H1108.500 M933 1512 H971.500 M981.500 1513 H1016 M1025 1513 H1060.500 M1070 1512 H1108.500 M933 1516 H971.500 M981.500 1517 H1016 M1025 1517 H1060.500 M1070 1516 H1108.500 M933 1520 H971.500 M981.500 1521 H1016 M1025 1521 H1060.500 M1070 1520 H1108.500 M933 1524 H971.500 M981.500 1525 H1016 M1025 1525 H1060.500 M1070 1524 H1108.500 M933 1528 H971.500 M981.500 1529 H1016 M1025 1529 H1060.500 M1070 1528 H1108.500 M933 1532 H971.500 M981.500 1533 H1016 M1025 1533 H1060.500 M1070 1532 H1108.500 M933 1536 H971.500 M981.500 1537 H1016 M1025 1537 H1060.500 M1070 1536 H1108.500 M933 1540 H971.500 M981.500 1541 H1016 M1025 1541 H1060.500 M1070 1540 H1108.500 M933 1544 H971.500 M981.500 1545 H1016 M1025 1545 H1060.500 M1070 1544 H1108.500 M933 1548 H971.500 M981.500 1549 H1016 M1025 1549 H1060.500 M1070 1548 H1108.500 M933 1552 H971.500 M981.500 1553 H1016 M1025 1553 H1060.500 M1070 1552 H1108.500 M933 1556 H971.500 M981.500 1557 H1016 M1025 1557 H1060.500 M1070 1556 H1108.500 M933 1560 H971.500 M981.500 1561 H1016 M1025 1561 H1060.500 M1070 1560 H1108.500 M933 1564 H971.500 M981.500 1565 H1016 M1025 1565 H1060.500 M1070 1564 H1108.500 M933 1568 H971.500 M981.500 1569 H1016 M1025 1569 H1060.500 M1070 1568 H1108.500 M933 1572 H971.500 M981.500 1573 H1016 M1025 1573 H1060.500 M1070 1572 H1108.500 M933 1576 H971.500 M981.500 1577 H1016 M1025 1577 H1060.500 M1070 1576 H1108.500 M933 1580 H971.500 M981.500 1581 H1016 M1025 1581 H1060.500 M1070 1580 H1108.500 M933 1584 H971.500 M981.500 1585 H1016 M1025 1585 H1060.500 M1070 1584 H1108.500" stroke="#7c7e82" stroke-width="1" opacity=".5" fill="none"/><rect x="975.2" y="1380" width="2.600" height="210" fill="#45474b"/><rect x="973.9" y="1378" width="5.200" height="12" fill="#b3b3b3"/><rect x="1019.2" y="1380" width="2.600" height="210" fill="#45474b"/><rect x="1017.9" y="1378" width="5.200" height="12" fill="#b3b3b3"/><rect x="1064.0" y="1380" width="2.600" height="210" fill="#45474b"/><rect x="1062.7" y="1378" width="5.200" height="12" fill="#b3b3b3"/><path d="M905 1393.7 L931.500 1391.7 H972 M1069.500 1391.7 H1110 L1136 1393.7 M905 1413.7 L931.500 1411.7 H972 M1069.500 1411.7 H1110 L1136 1413.7 M905 1433.7 L931.500 1431.7 H972 M1069.500 1431.7 H1110 L1136 1433.7 M905 1453.7 L931.500 1451.7 H972 M1069.500 1451.7 H1110 L1136 1453.7 M905 1473.7 L931.500 1471.7 H972 M1069.500 1471.7 H1110 L1136 1473.7 M905 1493.7 L931.500 1491.7 H972 M1069.500 1491.7 H1110 L1136 1493.7 M905 1513.7 L931.500 1511.7 H972 M1069.500 1511.7 H1110 L1136 1513.7 M905 1573.7 L931.500 1571.7 H972 M1069.500 1571.7 H1110 L1136 1573.7 M905 1593.7 L931.500 1591.7 H972 M1069.500 1591.7 H1110 L1136 1593.7" stroke="#0b0c0f" stroke-width="5.600" fill="none"/><path d="M980.500 1383.7 L998.500 1395.2 L1017 1383.7 M1024 1383.7 L1043 1395.2 L1061.500 1383.7 M980.500 1403.7 L998.500 1415.2 L1017 1403.7 M1024 1403.7 L1043 1415.2 L1061.500 1403.7 M980.500 1423.7 L998.500 1435.2 L1017 1423.7 M1024 1423.7 L1043 1435.2 L1061.500 1423.7 M980.500 1443.7 L998.500 1455.2 L1017 1443.7 M1024 1443.7 L1043 1455.2 L1061.500 1443.7 M980.500 1463.7 L998.500 1475.2 L1017 1463.7 M1024 1463.7 L1043 1475.2 L1061.500 1463.7 M980.500 1483.7 L998.500 1495.2 L1017 1483.7 M1024 1483.7 L1043 1495.2 L1061.500 1483.7 M980.500 1503.7 L998.500 1515.2 L1017 1503.7 M1024 1503.7 L1043 1515.2 L1061.500 1503.7 M980.500 1563.7 L998.500 1575.2 L1017 1563.7 M1024 1563.7 L1043 1575.2 L1061.500 1563.7 M980.500 1583.7 L998.500 1595.2 L1017 1583.7 M1024 1583.7 L1043 1595.2 L1061.500 1583.7" stroke="#0b0c0f" stroke-width="5" fill="none" stroke-linejoin="miter"/><path d="M1000 1397.7 L1006 1410.7 M1046 1410.7 L1052 1397.7 M1000 1417.7 L1006 1430.7 M1046 1430.7 L1052 1417.7 M1000 1437.7 L1006 1450.7 M1046 1450.7 L1052 1437.7 M1000 1457.7 L1006 1470.7 M1046 1470.7 L1052 1457.7 M1000 1477.7 L1006 1490.7 M1046 1490.7 L1052 1477.7 M1000 1497.7 L1006 1510.7 M1046 1510.7 L1052 1497.7 M1000 1517.7 L1006 1530.7 M1046 1530.7 L1052 1517.7" stroke="#1a1b1e" stroke-width="1.600" fill="none"/><circle cx="947" cy="1422" r="1.700" fill="#8e9093"/><circle cx="958" cy="1440" r="1.700" fill="#8e9093"/><circle cx="944" cy="1479" r="1.700" fill="#8e9093"/><circle cx="953" cy="1522" r="1.700" fill="#8e9093"/><circle cx="986" cy="1412" r="1.700" fill="#8e9093"/><circle cx="1046" cy="1434" r="1.700" fill="#8e9093"/><circle cx="1052" cy="1397" r="1.700" fill="#8e9093"/><circle cx="1087" cy="1415" r="1.700" fill="#8e9093"/><circle cx="1094" cy="1446" r="1.700" fill="#8e9093"/><circle cx="1085" cy="1466" r="1.700" fill="#8e9093"/><circle cx="1093" cy="1489" r="1.700" fill="#8e9093"/><circle cx="1080" cy="1512" r="1.700" fill="#8e9093"/><circle cx="1010" cy="1398" r="1.700" fill="#8e9093"/><circle cx="1118" cy="1398" r="1.700" fill="#8e9093"/><circle cx="1103" cy="1392" r="1.700" fill="#8e9093"/><rect x="900" y="1375" width="240" height="215" fill="url(#tg)"/><rect x="900" y="1375" width="240" height="215" fill="url(#tv)"/><rect x="906" y="1530.500" width="227" height="37.300" fill="url(#bg2)"/></g><path d="M1001.300 1538.600 L1027.400 1532.200 L1031.800 1532.400 L1023.500 1539.300 Z" fill="#9c2a2e"/><path d="M978.500 1551.500 C992 1537.500 1034 1536.500 1049.500 1551.500 C1030 1546 1000 1546.300 978.500 1551.500 Z" fill="#2a4f94"/></svg>
<svg class="a" style="left:1168px;top:1310px;" width="34" height="86" viewBox="1168 1310 34 86"><path d="M1184.200 1314.500 V1337.500 M1172.700 1326 H1195.700" stroke="#484848" stroke-width="3.200" fill="none"/><g fill="none" stroke="#484848" stroke-width="3" stroke-linecap="round" stroke-linejoin="round"><path d="M1172.9 1365.8 H1195.5"/><path d="M1178.3 1365.8 L1180.9 1361.0 H1187.5 L1190.1 1365.8"/><path d="M1175.1 1366.8 V1386.9 a2.6 2.6 0 0 0 2.6 2.6 H1190.8 a2.6 2.6 0 0 0 2.6 -2.6 V1366.8"/><path d="M1181.3 1371.5 V1384.7 M1187.1 1371.5 V1384.7"/></g></svg>
<div class="a" style="left:2006px;top:740px;width:16px;height:582px;background:#5e5e5e;border-radius:8px;"></div>
<span class="t" style="left:39.500px;top:1803px;font-size:28px;color:#484848;-webkit-text-stroke:.3px;transform-origin:0 0;transform:rotate(-90deg) translateY(-23px);letter-spacing:-.27px;">| 1.2.0-D | Pod: hhrjx</span>
<svg class="a" style="left:1160px;top:690px;" width="200" height="172" viewBox="1160 690 200 172"><defs><filter id="ps" x="-20%" y="-20%" width="140%" height="140%"><feGaussianBlur stdDeviation="2.200"/></filter></defs>
<path d="M1250 719 H1317 a34 34 0 0 1 0 68 H1250 Z" fill="#000" opacity=".25" filter="url(#ps)" transform="translate(0 2)"/>
<path d="M1250 719 H1317 a34 34 0 0 1 0 68 H1250 Z" fill="#fff"/>
<path d="M1250 723 H1317 a30 30 0 0 1 0 60 H1250 Z" fill="#1a1a1a"/>
<path d="M1194 790 V823.500 L1228.300 852.500 L1262.600 823.500 V790 Z" fill="#000" opacity=".25" filter="url(#ps)" transform="translate(0 2)"/>
<circle cx="1228.300" cy="752.800" r="55.800" fill="#fff"/>
<path d="M1194 785 V823.500 L1228.300 852.500 L1262.600 823.500 V785 Z" fill="#fff"/>
<circle cx="1228.300" cy="752.800" r="52" fill="#55be52"/>
<path d="M1198.200 780 V821.700 L1228.300 847.300 L1258.600 821.700 V780 Z" fill="#55be52"/>
<circle cx="1228.500" cy="753.200" r="38" fill="#fff"/>
<circle cx="1228.500" cy="753.200" r="33.700" fill="#fafafa" stroke="#dcdcdc" stroke-width="1.200"/>
<path d="M1208.800 755.500 L1221.200 769.200 L1246 741.300" fill="none" stroke="#55be52" stroke-width="8.600" stroke-linecap="round" stroke-linejoin="round"/></svg>
<div class="a" style="left:1268px;top:1046px;width:664px;height:514px;background:#fff;border-radius:7px;box-shadow:3px 3px 12px rgba(0,0,0,.36);"></div>
<div class="a" style="left:1268px;top:1046px;width:664px;height:84px;background:#173846;border-radius:7px 7px 0 0;box-sizing:border-box;border-top:1px solid #10303c;border-bottom:1px solid #10303c;"></div>
<svg class="a" style="left:1876px;top:1064px;" width="40" height="40" viewBox="1876 1064 40 40"><path d="M1882 1070.200 L1907.800 1096 M1907.800 1070.200 L1882 1096" stroke="#6b87a3" stroke-width="6.200" fill="none"/></svg>
<svg class="a" style="left:1326px;top:1276px;" width="136" height="120" viewBox="1326 1276 136 120"><g fill="none" stroke="#173846" stroke-width="10" stroke-linejoin="round">
<path d="M1409 1341 V1308 L1388 1286 H1345 a9 9 0 0 0 -9 9 V1377.500 a9 9 0 0 0 9 9 H1400 a9 9 0 0 0 9 -9 V1359" stroke-linecap="butt"/>
<path d="M1381 1288 V1313.500 H1407" stroke-linejoin="round"/>
<path d="M1370.500 1343.500 H1438" stroke-linecap="round"/>
</g>
<path d="M1436.700 1326.800 L1454.800 1343.500 L1436.700 1360.200 Z" fill="#173846" stroke="#173846" stroke-width="3" stroke-linejoin="round"/></svg>
<svg class="a" style="left:1482px;top:1238px;filter:blur(.4px);" width="40" height="140" viewBox="1482 1238 40 140"><defs><linearGradient id="rg" x1="0" x2="0" y1="0" y2="1"><stop offset="0" stop-color="#d9d9d9"/><stop offset="1" stop-color="#a9a6a0"/></linearGradient>
<linearGradient id="rf" x1="0" x2="0" y1="0" y2="1"><stop offset="0" stop-color="#fbfbfb"/><stop offset="1" stop-color="#fff"/></linearGradient></defs>
<circle cx="1502" cy="1258" r="14.800" fill="url(#rf)" stroke="url(#rg)" stroke-width="2.200"/>
<circle cx="1502" cy="1358" r="14.800" fill="url(#rf)" stroke="url(#rg)" stroke-width="2.200"/>
<circle cx="1502" cy="1307.800" r="15.800" fill="#0c2030"/>
<circle cx="1502" cy="1307.800" r="6.800" fill="#fff"/></svg>
<div class="a" style="left:1796px;top:1444px;width:60px;height:60px;background:#173846;border-radius:6px;"></div>
<svg class="a" style="left:1796px;top:1444px;" width="60" height="60" viewBox="1796 1444 60 60"><g fill="none" stroke="#fff" stroke-width="4.1" stroke-linejoin="round"><path d="M1813.3 1473.2 V1458.8 H1831.0 L1837.9 1464.8 V1473.2"/><rect x="1806.8" y="1473.2" width="37.5" height="14.1" rx="3.7"/><path d="M1813.3 1487.3 V1496.7 H1837.9 V1487.3"/><path d="M1829.6 1458.8 V1468.3 H1837.9 Z" fill="#fff" stroke-width="2.05"/></g><circle cx="1837.0" cy="1480.2" r="2.2" fill="#fff"/></svg>
<span class="t" style="left:163.4px;top:43.0px;font-size:70px;font-weight:400;color:#102836;letter-spacing:1.052px;-webkit-text-stroke:3px;transform-origin:0 0;transform:scaleX(1.09);">auto</span>
<span class="t" style="left:318.0px;top:43.0px;font-size:70px;font-weight:400;color:#8c2c2c;letter-spacing:0.333px;-webkit-text-stroke:3px;transform-origin:0 0;transform:scaleX(1.0);">flex</span>
<span class="t" style="left:202.5px;top:108.0px;font-size:20px;font-weight:400;color:#747474;letter-spacing:2.972px;-webkit-text-stroke:0px;">automotive software</span>
<span class="t" style="left:511.7px;top:118.3px;font-size:27px;font-weight:700;color:#262626;letter-spacing:-0.314px;-webkit-text-stroke:.9px;">RELATIES</span>
<span class="t" style="left:721.5px;top:118.3px;font-size:27px;font-weight:700;color:#262626;letter-spacing:0.167px;-webkit-text-stroke:.9px;">VOERTUIGEN</span>
<span class="t" style="left:967.8px;top:118.3px;font-size:27px;font-weight:700;color:#262626;letter-spacing:0.970px;-webkit-text-stroke:.9px;">IN-/VERKOOP</span>
<span class="t" style="left:1219.0px;top:118.3px;font-size:27px;font-weight:700;color:#262626;letter-spacing:-0.033px;-webkit-text-stroke:.9px;">WERKPLAATS</span>
<span class="t" style="left:1477.0px;top:118.3px;font-size:27px;font-weight:700;color:#262626;letter-spacing:0.267px;-webkit-text-stroke:.9px;">ONDERDELEN</span>
<span class="t" style="left:1733.0px;top:118.3px;font-size:27px;font-weight:700;color:#262626;letter-spacing:-0.043px;-webkit-text-stroke:.9px;">FACTUREN</span>
<span class="t" style="left:1563.0px;top:58.7px;font-size:25px;font-weight:700;color:#0c2a33;letter-spacing:0.478px;text-decoration:underline;text-decoration-thickness:2px;text-underline-offset:2px;-webkit-text-stroke:.9px;">/ Occasion om het Hoekje</span>
<span class="t" style="left:102.4px;top:202.4px;font-size:27px;font-weight:700;color:#0c2a33;letter-spacing:0.720px;-webkit-text-stroke:.9px;">Welkom</span>
<span class="t" style="left:356.0px;top:202.4px;font-size:27px;font-weight:700;color:#0c2a33;letter-spacing:0.880px;-webkit-text-stroke:.9px;">Bandenhotel</span>
<span class="t" style="left:610.0px;top:202.4px;font-size:27px;font-weight:700;color:#0c2a33;letter-spacing:0.400px;-webkit-text-stroke:.9px;">Boekhouding</span>
<span class="t" style="left:864.5px;top:202.4px;font-size:27px;font-weight:700;color:#0c2a33;letter-spacing:0.722px;-webkit-text-stroke:.9px;">Werkorders</span>
<span class="t" style="left:1117.5px;top:202.4px;font-size:27px;font-weight:700;color:#0c2a33;letter-spacing:0.864px;-webkit-text-stroke:.9px;">Instellingen</span>
<span class="t" style="left:71.0px;top:384.0px;font-size:33px;font-weight:700;color:#464646;letter-spacing:0.321px;-webkit-text-stroke:.9px;">20210185 | KZ-313-X | BMW 216D ACTIVE TOURER 216D EXEC</span>
<span class="t" style="left:1591.5px;top:388.0px;font-size:27px;font-weight:400;color:#4a4a4a;letter-spacing:0.900px;-webkit-text-stroke:.7px;">Status</span>
<span class="t" style="left:1729.7px;top:386.0px;font-size:27px;font-weight:400;color:#222;letter-spacing:0.660px;-webkit-text-stroke:.7px;">Gereed</span>
<span class="t" style="left:87.5px;top:481.2px;font-size:25px;font-weight:700;color:#556468;letter-spacing:0.714px;-webkit-text-stroke:.9px;">Algemeen</span>
<span class="t" style="left:290.0px;top:481.2px;font-size:25px;font-weight:700;color:#556468;letter-spacing:0.800px;-webkit-text-stroke:.9px;">Invoer</span>
<span class="t" style="left:463.0px;top:481.2px;font-size:25px;font-weight:700;color:#556468;letter-spacing:0.818px;-webkit-text-stroke:.9px;">Bestellingen</span>
<span class="t" style="left:695.8px;top:481.2px;font-size:25px;font-weight:700;color:#556468;letter-spacing:0.243px;-webkit-text-stroke:.9px;">0 FOTO&#39;S</span>
<span class="t" style="left:896.7px;top:481.2px;font-size:25px;font-weight:700;color:#0c2a33;letter-spacing:0.329px;-webkit-text-stroke:.9px;">Bandenwisseling</span>
<span class="t" style="left:1197.0px;top:481.2px;font-size:25px;font-weight:700;color:#556468;letter-spacing:1.200px;-webkit-text-stroke:.9px;">Uren</span>
<span class="t" style="left:1360.0px;top:481.2px;font-size:25px;font-weight:700;color:#556468;letter-spacing:0.625px;-webkit-text-stroke:.9px;">Checklist</span>
<span class="t" style="left:1576.0px;top:481.2px;font-size:25px;font-weight:700;color:#556468;letter-spacing:1.222px;-webkit-text-stroke:.9px;">Verwerking</span>
<span class="t" style="left:60.7px;top:549.5px;font-size:33px;font-weight:700;color:#0c2a33;letter-spacing:-0.800px;-webkit-text-stroke:.9px;">Banden</span>
<span class="t" style="left:62.7px;top:615.8px;font-size:27px;font-weight:400;color:#484848;letter-spacing:0.618px;-webkit-text-stroke:.7px;">Wissel datum</span>
<span class="t" style="left:434.0px;top:615.8px;font-size:27px;font-weight:400;color:#888;letter-spacing:0.278px;-webkit-text-stroke:.6px;">24-04-2021</span>
<span class="t" style="left:60.7px;top:749.2px;font-size:33px;font-weight:700;color:#0c2a33;letter-spacing:-0.767px;-webkit-text-stroke:.9px;">Bandensets</span>
<span class="t" style="left:131.0px;top:811.3px;font-size:26px;font-weight:400;color:#4a4a4a;letter-spacing:1.333px;-webkit-text-stroke:.7px;">Bandensets</span>
<span class="t" style="left:400.7px;top:811.3px;font-size:26px;font-weight:400;color:#4a4a4a;letter-spacing:1.775px;-webkit-text-stroke:.7px;">Merk voor</span>
<span class="t" style="left:671.0px;top:811.3px;font-size:26px;font-weight:400;color:#4a4a4a;letter-spacing:1.600px;-webkit-text-stroke:.7px;">Merk achter</span>
<span class="t" style="left:941.0px;top:811.3px;font-size:26px;font-weight:400;color:#4a4a4a;letter-spacing:1.600px;-webkit-text-stroke:.7px;">Status</span>
<span class="t" style="left:396.5px;top:882.0px;font-size:27px;font-weight:400;color:#484848;letter-spacing:1.089px;-webkit-text-stroke:.7px;">Vredestein</span>
<span class="t" style="left:666.5px;top:882.0px;font-size:27px;font-weight:400;color:#484848;letter-spacing:1.089px;-webkit-text-stroke:.7px;">Vredestein</span>
<span class="t" style="left:936.2px;top:882.0px;font-size:27px;font-weight:400;color:#484848;letter-spacing:1.144px;-webkit-text-stroke:.7px;">Gemonteerd</span>
<span class="t" style="left:394.5px;top:962.0px;font-size:27px;font-weight:400;color:#484848;letter-spacing:1.300px;-webkit-text-stroke:.7px;">Michelin</span>
<span class="t" style="left:664.5px;top:962.0px;font-size:27px;font-weight:400;color:#484848;letter-spacing:1.300px;-webkit-text-stroke:.7px;">Michelin</span>
<span class="t" style="left:935.2px;top:962.0px;font-size:27px;font-weight:400;color:#484848;letter-spacing:1.169px;-webkit-text-stroke:.7px;">In bandenhotel</span>
<span class="t" style="left:60.7px;top:1116.2px;font-size:27px;font-weight:400;color:#484848;letter-spacing:1.075px;-webkit-text-stroke:.7px;">Bandenset</span>
<span class="t" style="left:61.7px;top:1175.8px;font-size:27px;font-weight:400;color:#484848;letter-spacing:0.780px;-webkit-text-stroke:.7px;">Status</span>
<span class="t" style="left:440.0px;top:1115.2px;font-size:27px;font-weight:400;color:#222;letter-spacing:0.422px;-webkit-text-stroke:.7px;">All season</span>
<span class="t" style="left:439.0px;top:1174.8px;font-size:27px;font-weight:400;color:#222;letter-spacing:1.311px;-webkit-text-stroke:.7px;">Gemonteerd</span>
<span class="t" style="left:60.8px;top:1751.8px;font-size:33px;font-weight:700;color:#0c2a33;letter-spacing:1.040px;-webkit-text-stroke:.9px;">Detail</span>
<span class="t" style="left:232.8px;top:1401.9px;font-size:27px;font-weight:400;color:#bcbcbc;letter-spacing:-1.550px;-webkit-text-stroke:.6px;">1,1</span>
<span class="t" style="left:564.5px;top:1401.9px;font-size:27px;font-weight:400;color:#000;letter-spacing:0.000px;-webkit-text-stroke:.5px;">3</span>
<span class="t" style="left:245.0px;top:1569.5px;font-size:27px;font-weight:400;color:#000;letter-spacing:0.000px;-webkit-text-stroke:.5px;">4</span>
<span class="t" style="left:564.5px;top:1569.5px;font-size:27px;font-weight:400;color:#000;letter-spacing:0.000px;-webkit-text-stroke:.5px;">5</span>
<span class="t" style="left:414.5px;top:1717.5px;font-size:27px;font-weight:400;color:#000;letter-spacing:0.000px;-webkit-text-stroke:.5px;">6</span>
<span class="t" style="left:1287.3px;top:1073.7px;font-size:27px;font-weight:400;color:#fff;letter-spacing:0.010px;-webkit-text-stroke:.7px;">BANDENLABEL</span>
<span class="t" style="left:1308.5px;top:1180.0px;font-size:27px;font-weight:400;color:#666;letter-spacing:1.592px;-webkit-text-stroke:.7px;">Afdrukformaat</span>
<span class="t" style="left:1527.2px;top:1251.0px;font-size:25px;font-weight:400;color:#333;letter-spacing:0.774px;-webkit-text-stroke:.7px;">Meerdere labels A6 op A4</span>
<span class="t" style="left:1527.2px;top:1301.0px;font-size:25px;font-weight:400;color:#333;letter-spacing:0.831px;-webkit-text-stroke:.7px;">Labels A6 formaat</span>
<span class="t" style="left:1527.2px;top:1351.0px;font-size:25px;font-weight:400;color:#333;letter-spacing:0.677px;-webkit-text-stroke:.7px;">Labels 96x96mm</span>
<span class="t" style="left:1303.7px;top:741.0px;font-size:30px;font-weight:700;color:#fff;letter-spacing:0.000px;-webkit-text-stroke:.9px;">1</span>
<span class="t" style="left:962.7px;top:1552.5px;font-size:15.5px;font-weight:700;color:#151515;letter-spacing:0.700px;transform-origin:0 0;transform:scaleX(1.0);-webkit-text-stroke:.9px;">VREDESTEIN</span>
</div></body></html>
